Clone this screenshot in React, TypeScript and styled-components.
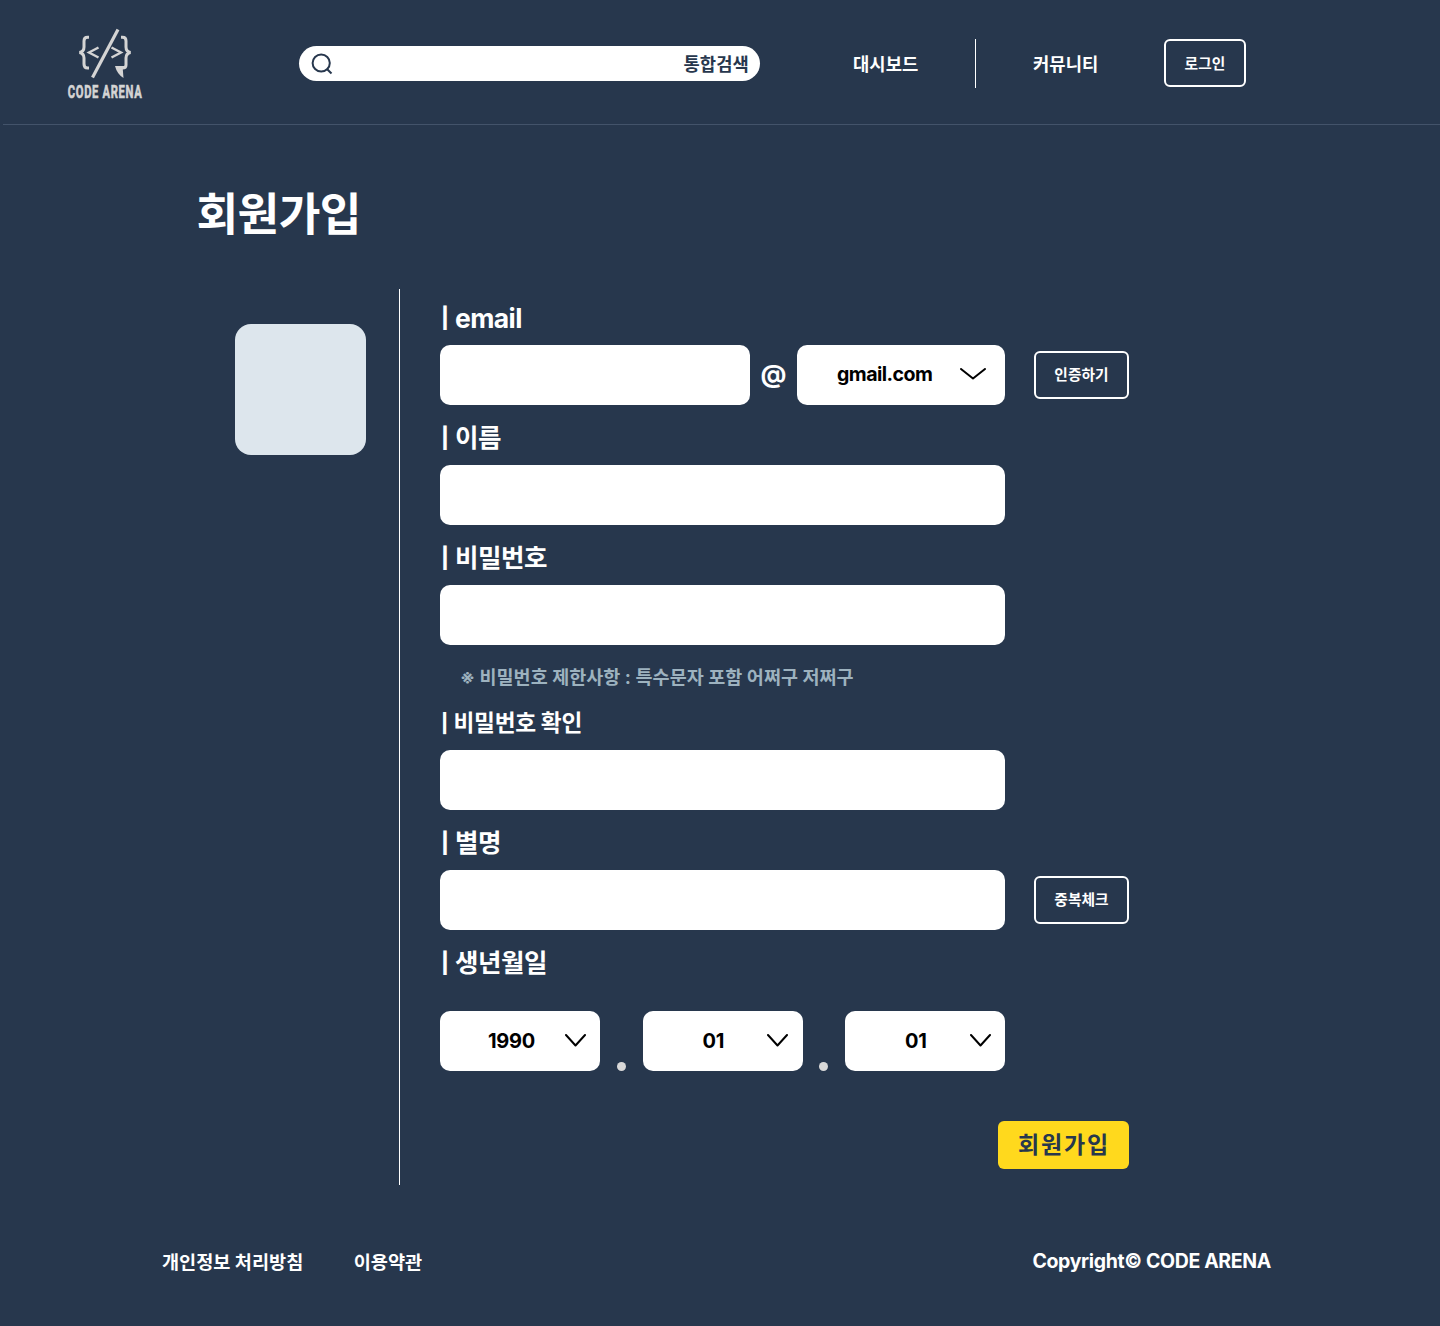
import React from "react";
import styled, { createGlobalStyle } from "styled-components";

const colors = {
  navy: "#27374D",
  mist: "#DDE6ED",
  steel: "#9DB2BF",
  yellow: "#FFD91D",
};

const GlobalStyle = createGlobalStyle`
  * { box-sizing: border-box; }
  body {
    margin: 0;
    background: ${colors.navy};
    font-family: Inter, "Noto Sans CJK KR", sans-serif;
  }
  button, input { font-family: inherit; }
`;

const Page = styled.div`
  width: 1440px;
  height: 1326px;
  display: flex;
  flex-direction: column;
  overflow: hidden;
  color: #fff;
  background: ${colors.navy};
`;

const Text = styled.span<{ $size: number; $track?: number; $weight?: number; $color?: string; $shift?: number }>`
  display: block;
  flex: none;
  white-space: pre;
  line-height: 1;
  font-size: ${(p) => p.$size}px;
  font-weight: ${(p) => p.$weight ?? 700};
  letter-spacing: ${(p) => p.$track ?? 0}px;
  color: ${(p) => p.$color ?? "inherit"};
  margin-top: ${(p) => p.$shift ?? 0}px;
`;

const Header = styled.header`
  flex: none;
  height: 125px;
  margin-left: 3px;
  padding-left: 61px;
  display: flex;
  align-items: flex-start;
  border-bottom: 1px solid #43536a;
`;

const Logo = styled.svg`
  flex: none;
  width: 84px;
  height: 80px;
  margin-top: 24px;
  overflow: visible;
`;

const SearchBar = styled.div`
  flex: none;
  width: 461px;
  height: 35px;
  margin: 46.3px 0 0 151px;
  padding: 0 11px 0 12px;
  display: flex;
  align-items: center;
  justify-content: space-between;
  border-radius: 18px;
  background: #fff;
`;

const Nav = styled.nav`
  height: 49px;
  margin: 39px 0 0 93px;
  display: flex;
  align-items: center;
`;

const NavItem = styled.div<{ $width: number }>`
  flex: none;
  width: ${(p) => p.$width}px;
`;

const NavDivider = styled.div`
  width: 1px;
  height: 49px;
  margin-right: 57px;
  background: #fff;
`;

const OutlineButton = styled.button<{ $width: number }>`
  flex: none;
  width: ${(p) => p.$width}px;
  height: 48px;
  padding: 0;
  display: flex;
  align-items: center;
  justify-content: center;
  color: #fff;
  background: transparent;
  border: 2px solid #fff;
  border-radius: 6px;

  ${Nav} > & {
    align-self: flex-start;
  }
`;

const Title = styled.h1`
  flex: none;
  height: 164px;
  margin: 0;
  padding: 67px 0 0 196.5px;
`;

const Body = styled.main`
  flex: none;
  height: 896px;
  display: flex;
`;

const AvatarColumn = styled.div`
  flex: none;
  width: 400px;
  padding: 35px 0 0 235px;
  border-right: 1px solid #fff;
`;

const Avatar = styled.div`
  width: 131px;
  height: 131px;
  border-radius: 16px;
  background: ${colors.mist};
`;

const Form = styled.form`
  width: 689px;
  margin-left: 40px;
  padding-top: 2.5px;
  display: flex;
  flex-direction: column;
  gap: 7px;
`;

const Field = styled.div`
  flex: none;
`;

const Label = styled.label`
  height: 53px;
  display: flex;
  align-items: center;
  padding-left: 1px;
`;

const Mark = styled.span<{ $small?: boolean }>`
  width: ${(p) => (p.$small ? 12.5 : 14)}px;
  margin-top: 1px;
  line-height: 1;
  font-size: ${(p) => (p.$small ? 18.5 : 20.5)}px;
  font-weight: 800;
`;

const Row = styled.div<{ $top?: number }>`
  height: 60px;
  margin-top: ${(p) => p.$top ?? 0}px;
  display: flex;
  align-items: center;
`;

const Input = styled.input<{ $width: number }>`
  flex: none;
  width: ${(p) => p.$width}px;
  height: 60px;
  padding: 0 16px;
  border: 0;
  border-radius: 10px;
  background: #fff;
`;

const At = styled.div`
  width: 47px;
  display: flex;
  justify-content: center;
`;

const Select = styled.div<{ $width: number; $end: number; $start: number }>`
  flex: none;
  width: ${(p) => p.$width}px;
  height: 60px;
  padding: 0 ${(p) => p.$end}px 0 ${(p) => p.$start}px;
  display: flex;
  align-items: center;
  justify-content: space-between;
  color: #000;
  border-radius: 10px;
  background: #fff;
`;

const Action = styled.div`
  margin-left: 29px;
`;

const Hint = styled.div`
  flex: none;
  height: 38px;
  padding: 0 0 0 20px;
  display: flex;
  align-items: center;
`;

const DotCell = styled.div`
  width: 42.5px;
  height: 60px;
  display: flex;
  align-items: flex-end;
  justify-content: center;
`;

const Dot = styled.div`
  width: 9px;
  height: 9px;
  border-radius: 50%;
  background: #d9d9d9;
`;

const Submit = styled.button`
  flex: none;
  align-self: flex-end;
  width: 131px;
  height: 48px;
  margin-top: 43px;
  padding: 0 0 0 1px;
  display: flex;
  align-items: center;
  justify-content: center;
  border: 0;
  border-radius: 6px;
  color: ${colors.navy};
  background: ${colors.yellow};
`;

const Footer = styled.footer`
  flex: 1;
  padding: 67px 169px 0 162px;
  display: flex;
  align-items: flex-start;
  justify-content: space-between;
`;

const FooterLinks = styled.div`
  display: flex;
  gap: 50.5px;
`;

const ChevronIcon = styled.svg`
  flex: none;
  margin-top: -1px;
`;

const Chevron = ({ width, height }: { width: number; height: number }) => (
  <ChevronIcon width={width} height={height} viewBox={`0 0 ${width} ${height}`} fill="none">
    <path
      d={`M1 1L${width / 2} ${height - 1.5}L${width - 1} 1`}
      stroke="#000"
      strokeWidth="2"
      strokeLinecap="round"
      strokeLinejoin="round"
    />
  </ChevronIcon>
);

const FieldLabel = ({ text, size = 25.5, track = -0.45, small = false }: { text: string; size?: number; track?: number; small?: boolean }) => (
  <Label>
    <Mark $small={small}>|</Mark>
    <Text $size={size} $track={track} $shift={small ? 1 : 0}>{text}</Text>
  </Label>
);

export default function App() {
  return (
    <>
      <GlobalStyle />
      <Page>
        <Header>
          <Logo viewBox="0 0 84 80" fill="none" stroke="#d4d4d4">
            <path d="M25 13.2H23.5Q20 13.2 20 17V23Q20 27.5 15.5 28.5Q20 29.5 20 34V40Q20 44 23.5 44H25" strokeWidth="3" />
            <path d="M57 13.2H58.5Q62 13.2 62 17V23Q62 27.5 66.5 28.5Q62 29.5 62 34V41Q62 44 58.5 44" strokeWidth="3" />
            <path d="M34.5 23.5L25 28.5L34.5 33.5" strokeWidth="2.4" />
            <path d="M47.5 23.5L57 28.5L47.5 33.5" strokeWidth="2.4" />
            <path d="M54 5.5L28.5 53.5" strokeWidth="3.2" />
            <path d="M51 42H61.5L58.8 45.5L59.5 54Q53 50 51 42Z" fill="#d4d4d4" stroke="none" />
            <text
              transform="translate(3.8 74) scale(1 1.62)"
              fill="#d4d4d4"
              stroke="#d4d4d4"
              strokeWidth="0.4"
              fontFamily="Roboto, sans-serif"
              fontSize="11.2"
              fontWeight="700"
              letterSpacing="0.67"
            >
              CODE ARENA
            </text>
          </Logo>
          <SearchBar>
            <svg width="22" height="22" viewBox="0 0 22 22" fill="none" stroke={colors.navy} strokeWidth="2">
              <circle cx="10.2" cy="10" r="8.6" />
              <path d="M16.2 16.2L20.5 20.5" />
            </svg>
            <Text $size={17.7} $track={0.1} $shift={2} $color={colors.navy}>통합검색</Text>
          </SearchBar>
          <Nav>
            <NavItem $width={122}><Text $size={17.7} $track={0.1} $shift={2}>대시보드</Text></NavItem>
            <NavDivider />
            <NavItem $width={131}><Text $size={17.7} $track={0.1} $shift={2}>커뮤니티</Text></NavItem>
            <OutlineButton $width={82}><Text $size={14.7} $track={0.1} $shift={3}>로그인</Text></OutlineButton>
          </Nav>
        </Header>

        <Title><Text as="span" $size={45.3} $track={-0.6}>회원가입</Text></Title>

        <Body>
          <AvatarColumn><Avatar /></AvatarColumn>
          <Form>
            <Field>
              <FieldLabel text="email" size={26.5} track={-0.6} />
              <Row>
                <Input $width={310} />
                <At><Text $size={25.5} $shift={-1}>@</Text></At>
                <Select $width={208} $start={40} $end={19.5}>
                  <Text $size={19.6} $track={-0.55} $shift={1}>gmail.com</Text>
                  <Chevron width={26} height={12} />
                </Select>
                <Action><OutlineButton type="button" $width={95}><Text $size={14.7} $track={0.1} $shift={2}>인증하기</Text></OutlineButton></Action>
              </Row>
            </Field>

            <Field>
              <FieldLabel text="이름" />
              <Row><Input $width={565} /></Row>
            </Field>

            <Field>
              <FieldLabel text="비밀번호" />
              <Row><Input $width={565} type="password" /></Row>
            </Field>
            <Hint>
              <Text $size={18.5} $track={0.05} $color={colors.steel} $shift={14}>※ 비밀번호 제한사항 : 특수문자 포함 어쩌구 저쩌구</Text>
            </Hint>

            <Field>
              <FieldLabel text="비밀번호 확인" size={22.7} track={-0.3} small />
              <Row><Input $width={565} type="password" /></Row>
            </Field>

            <Field>
              <FieldLabel text="별명" />
              <Row>
                <Input $width={565} />
                <Action><OutlineButton type="button" $width={95}><Text $size={14.7} $track={0.1} $shift={2}>중복체크</Text></OutlineButton></Action>
              </Row>
            </Field>

            <Field>
              <FieldLabel text="생년월일" />
              <Row $top={21}>
                <Select $width={160} $start={48} $end={14.5}>
                  <Text $size={20} $track={-0.3}>1990</Text>
                  <Chevron width={21} height={13} />
                </Select>
                <DotCell><Dot /></DotCell>
                <Select $width={160} $start={60} $end={14.5}>
                  <Text $size={20} $track={-0.3}>01</Text>
                  <Chevron width={21} height={13} />
                </Select>
                <DotCell><Dot /></DotCell>
                <Select $width={160} $start={60} $end={14.5}>
                  <Text $size={20} $track={-0.3}>01</Text>
                  <Chevron width={21} height={13} />
                </Select>
              </Row>
            </Field>

            <Submit type="button"><Text $size={23} $track={1.9} $shift={2}>회원가입</Text></Submit>
          </Form>
        </Body>

        <Footer>
          <FooterLinks>
            <Text $size={18.6} $shift={1}>개인정보 처리방침</Text>
            <Text $size={18.6} $shift={1}>이용약관</Text>
          </FooterLinks>
          <Text $size={19.5} $track={-0.36}>Copyright© CODE ARENA</Text>
        </Footer>
      </Page>
    </>
  );
}
